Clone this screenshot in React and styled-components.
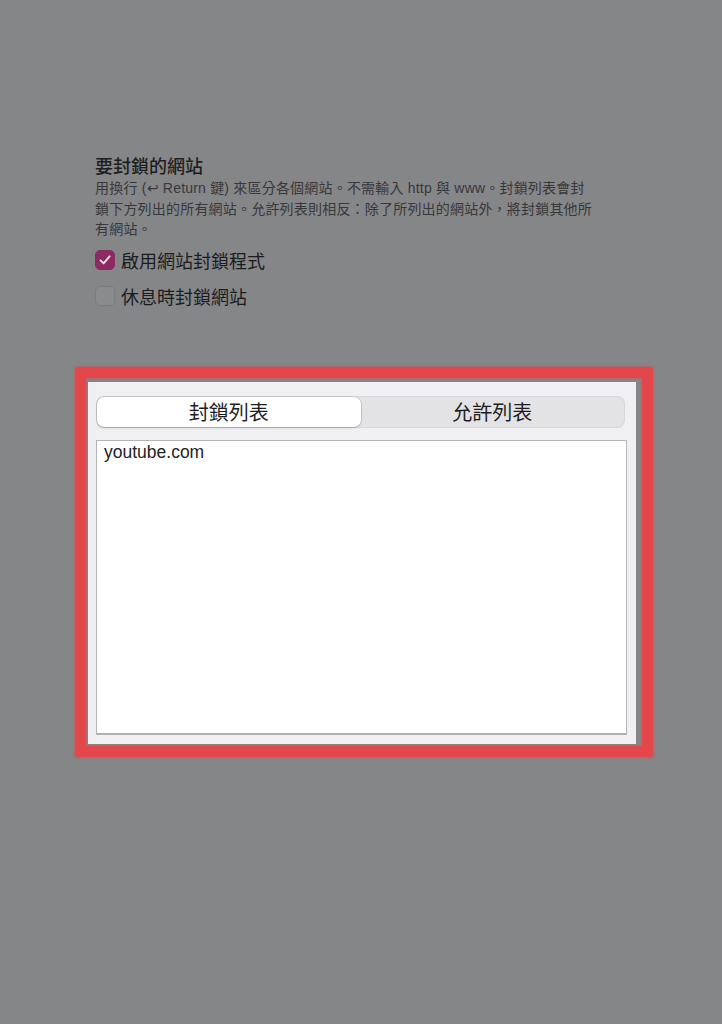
import React from "react";
import styled, { createGlobalStyle } from "styled-components";

const Global = createGlobalStyle`
  html, body { margin: 0; padding: 0; background: #858688; }
  body {
    font-family: "Liberation Sans", "Noto Sans CJK TC", sans-serif;
    -webkit-font-smoothing: antialiased;
  }
`;

const Page = styled.div`
  min-height: 1024px;
  padding-top: 156px;
  box-sizing: border-box;
`;

const Section = styled.section`
  margin-left: 95px;
  width: 502px;
`;

const Heading = styled.h2`
  margin: 0;
  font-size: 18px;
  line-height: 22px;
  font-weight: 500;
  color: #1e1e20;
`;

const Description = styled.p`
  margin: 0;
  font-size: 14px;
  letter-spacing: 0.2px;
  line-height: 20.5px;
  color: #38383a;
`;

const Options = styled.div`
  margin-top: 6px;
  display: flex;
  flex-direction: column;
  gap: 8px;
`;

const CheckRow = styled.label`
  display: flex;
  align-items: center;
  gap: 6px;
  height: 28px;
  font-size: 18px;
  color: #1c1c1e;
`;

const Box = styled.span`
  width: 20px;
  height: 20px;
  box-sizing: border-box;
  border-radius: 5px;
  display: flex;
  align-items: center;
  justify-content: center;
  background: ${(p) => (p.$checked ? "#8b2a63" : "#8a8b8d")};
  border: 1px solid ${(p) => (p.$checked ? "#8b2a63" : "#7a7b7d")};
`;

const Highlight = styled.div`
  margin-top: 57px;
  margin-left: 75px;
  width: 578px;
  height: 390px;
  box-sizing: border-box;
  border: 11px solid #e4474b;
  border-radius: 3px;
  padding: 4px 6px 2px 2px;
  box-shadow: 0 0 2px 1px rgba(228, 71, 75, 0.55),
    inset 0 0 2px 1px rgba(228, 71, 75, 0.55);
  display: flex;
`;

const Panel = styled.div`
  flex: 1;
  background: #f0f0f3;
  padding: 14px 9px 9px 8px;
  display: flex;
  flex-direction: column;
  gap: 12px;
`;

const Segmented = styled.div`
  height: 32px;
  margin-right: 2px;
  box-sizing: border-box;
  padding: 1px;
  border-radius: 8px;
  background: #e3e3e6;
  box-shadow: inset 0 0 0 1px #d8d8db;
  display: grid;
  grid-template-columns: 1fr 1fr;
`;

const Segment = styled.div`
  display: flex;
  align-items: center;
  justify-content: center;
  border-radius: 7px;
  font-size: 20px;
  color: #1d1d1f;
  background: ${(p) => (p.$active ? "#ffffff" : "transparent")};
  box-shadow: ${(p) =>
    p.$active
      ? "0 0 0 0.5px rgba(0,0,0,0.18), 0 1px 2px rgba(0,0,0,0.18)"
      : "none"};
`;

const ListBox = styled.div`
  flex: 1;
  background: #ffffff;
  border: 1px solid #b4b4b7;
  border-bottom: 2px solid #b0b0b2;
  padding: 0 7px;
  font-size: 17.5px;
  line-height: 22px;
  color: #222;
`;

function Check() {
  return (
    <svg width="14" height="14" viewBox="0 0 14 14" fill="none">
      <path
        d="M2.5 7.4 L5.6 10.4 L11.6 3.4"
        stroke="#eadbe4"
        strokeWidth="2"
        strokeLinecap="round"
        strokeLinejoin="round"
      />
    </svg>
  );
}

export default function App() {
  return (
    <>
      <Global />
      <Page>
        <Section>
          <Heading>要封鎖的網站</Heading>
          <Description>
            用換行 (↩ Return 鍵) 來區分各個網站。不需輸入 http 與 www。封鎖列表會封鎖下方列出的所有網站。允許列表則相反：除了所列出的網站外，將封鎖其他所有網站。
          </Description>
          <Options>
            <CheckRow>
              <Box $checked>
                <Check />
              </Box>
              啟用網站封鎖程式
            </CheckRow>
            <CheckRow>
              <Box />
              休息時封鎖網站
            </CheckRow>
          </Options>
        </Section>
        <Highlight>
          <Panel>
            <Segmented>
              <Segment $active>封鎖列表</Segment>
              <Segment>允許列表</Segment>
            </Segmented>
            <ListBox>youtube.com</ListBox>
          </Panel>
        </Highlight>
      </Page>
    </>
  );
}
